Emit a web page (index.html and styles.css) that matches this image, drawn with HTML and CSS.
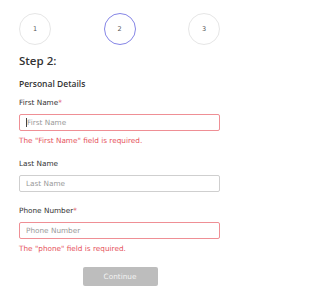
FILE: index.html
```html
<!DOCTYPE html>
<html>
<head>
<meta charset="utf-8">
<link rel="stylesheet" href="styles.css">
</head>
<body>
<div class="page">
  <div class="stepper">
    <div class="circle">1</div>
    <div class="circle active">2</div>
    <div class="circle">3</div>
  </div>
  <h2 class="step-title">Step 2:</h2>
  <h3 class="section-title">Personal Details</h3>

  <div class="field">
    <label class="label">First Name<span class="req">*</span></label>
    <div class="input error-input focused"><span class="caret"></span><span class="ph">First Name</span></div>
    <div class="error">The "First Name" field is required.</div>
  </div>

  <div class="field field-last">
    <label class="label">Last Name</label>
    <div class="input"><span class="ph">Last Name</span></div>
  </div>

  <div class="field field-phone">
    <label class="label">Phone Number<span class="req">*</span></label>
    <div class="input error-input"><span class="ph">Phone Number</span></div>
    <div class="error">The "phone" field is required.</div>
  </div>

  <div class="actions">
    <button class="btn">Continue</button>
  </div>
</div>
</body>
</html>
```
FILE: styles.css
```css
* { box-sizing: border-box; }
html, body { margin: 0; padding: 0; background: #fff; }
body { font-family: "DejaVu Sans", "Open Sans", sans-serif; color: #3a3a3a; }
.page { width: 250px; padding: 13px 30px 0 19px; }
.stepper { display: flex; justify-content: space-between; }
.circle {
  width: 32px; height: 32px; border-radius: 50%;
  border: 1px solid #e6e6e6;
  display: flex; align-items: center; justify-content: center;
  font-size: 6.5px; color: #555;
}
.circle.active { border-color: #8585e6; }
.step-title { margin: 8px 0 0; font-family: "Open Sans", sans-serif; font-size: 11.5px; line-height: 16px; font-weight: 600; color: #333; }
.section-title { margin: 9px 0 0; font-family: "Open Sans", sans-serif; font-size: 8.5px; line-height: 12px; font-weight: 600; color: #333; }
.field { margin-top: 7px; }
.label { display: block; font-size: 7.3px; line-height: 12px; color: #333; }
.req { color: #e0424c; }
.input {
  margin-top: 5px; height: 17px; border: 1px solid #cfcfcf; border-radius: 2px;
  display: flex; align-items: center; padding-left: 6px;
  font-size: 7.3px; color: #999;
}
.error-input { border-color: #ef8f95; }
.caret { width: 1px; height: 9px; background: #444; }
.error { margin-top: 5px; font-size: 7.3px; line-height: 10px; color: #e6535c; }
.field-last { margin-top: 12px; }
.field-phone { margin-top: 13px; }
.actions { display: flex; justify-content: center; margin-top: 13px; padding-left: 1px; }
.btn {
  width: 75px; height: 19px; border: 0; border-radius: 2px;
  background: #bdbdbd; color: #f2f2f2;
  font-family: inherit; font-size: 7.3px; padding: 0;
}
```
